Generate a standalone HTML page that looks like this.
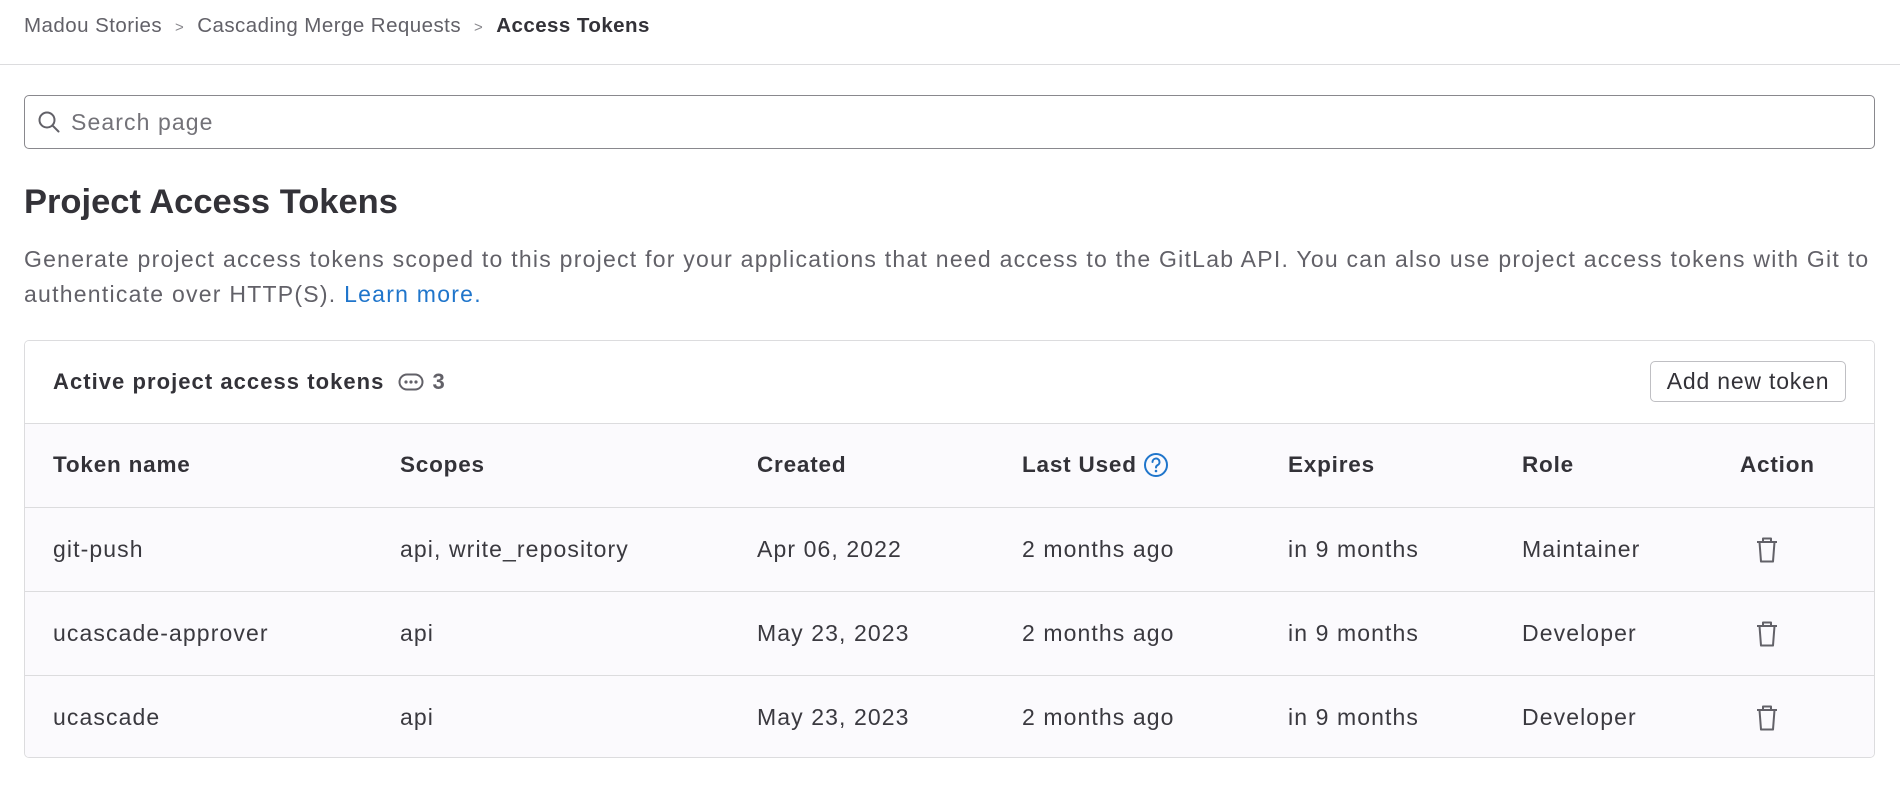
<!DOCTYPE html>
<html><head><meta charset="utf-8"><style>
*{box-sizing:border-box;margin:0;padding:0}
body{width:1900px;height:788px;background:#fff;font-family:"Liberation Sans",sans-serif;color:#333238;position:relative;overflow:hidden}
.abs{position:absolute;white-space:nowrap}
.bc{top:14px;left:24px;font-size:20.5px;color:#626168;letter-spacing:0.45px}
.bc b{color:#333238}
.bc .sep{margin:0 13px;font-size:15px;color:#89888d}
.div{top:64px;left:0;width:1900px;height:1px;background:#dcdcde}
.search{top:95px;left:24px;width:1851px;height:54px;border:1px solid #89888d;border-radius:5px}
.search span{position:absolute;left:46px;top:13px;font-size:23px;letter-spacing:1.1px;color:#737278}
.h1{top:183px;left:24px;font-size:34.5px;font-weight:bold;color:#333238}
.desc{top:242px;left:24px;font-size:23px;letter-spacing:1.25px;line-height:35px;color:#626168;white-space:normal;width:1850px}
.desc a{color:#1f75cb;text-decoration:none}
.card{top:340px;left:24px;width:1851px;height:418px;border:1px solid #dcdcde;border-radius:5px;overflow:hidden}
.hdr{height:83px;border-bottom:1px solid #dcdcde;position:relative;background:#fff}
.hdr .t{position:absolute;left:28px;top:28px;font-size:22px;letter-spacing:1.05px;font-weight:bold;display:flex;align-items:center}
.hdr .c{font-size:22px;font-weight:bold;color:#626168;margin-left:8px}
.btn{position:absolute;left:1625px;top:20px;width:196px;height:41px;border:1px solid #bfbfc3;border-radius:5px;font-size:23px;letter-spacing:0.8px;text-align:center;line-height:39px;color:#333238}
.row{height:84px;border-bottom:1px solid #dcdcde;background:#fbfafd;position:relative;font-size:23px;letter-spacing:1.1px;color:#3a393f}
.row:last-child{border-bottom:none}
.row span{position:absolute;top:28px;display:flex;align-items:center}
.th span{font-weight:bold;font-size:22.5px;letter-spacing:0.8px;color:#333238}
</style></head><body>
<div class="abs bc">Madou Stories<span class="sep">&gt;</span>Cascading Merge Requests<span class="sep">&gt;</span><b>Access Tokens</b></div>
<div class="abs div"></div>
<div class="abs search"><svg style="position:absolute;left:13px;top:15px" width="22" height="22" viewBox="0 0 22 22"><circle cx="9" cy="9" r="7.5" fill="none" stroke="#626168" stroke-width="2"/><path d="M14.5 14.5L20.5 20.5" stroke="#626168" stroke-width="2" stroke-linecap="round"/></svg><span>Search page</span></div>
<div class="abs h1">Project Access Tokens</div>
<div class="abs desc">Generate project access tokens scoped to this project for your applications that need access to the GitLab API. You can also use project access tokens with Git to authenticate over HTTP(S). <a>Learn more.</a></div>
<div class="abs card">
<div class="hdr"><span class="t">Active project access tokens
<svg style="margin-left:14px" width="26" height="18" viewBox="0 0 26 18"><rect x="1.5" y="1.5" width="23" height="15" rx="7.5" fill="none" stroke="#626168" stroke-width="2"/><circle cx="8" cy="9" r="1.6" fill="#626168"/><circle cx="13" cy="9" r="1.6" fill="#626168"/><circle cx="18" cy="9" r="1.6" fill="#626168"/></svg>
<span class="c">3</span></span>
<div class="btn">Add new token</div></div>
<div class="row th"><span style="left:28px">Token name</span><span style="left:375px">Scopes</span><span style="left:732px">Created</span><span style="left:997px">Last Used<svg style="margin-left:6px" width="26" height="26" viewBox="0 0 26 26"><circle cx="13" cy="13" r="11" fill="none" stroke="#1f75cb" stroke-width="2"/><path d="M9.5 10a3.5 3.5 0 1 1 5 3.2c-1 .5-1.5 1.2-1.5 2.3" fill="none" stroke="#1f75cb" stroke-width="2" stroke-linecap="round"/><circle cx="13" cy="19" r="1.3" fill="#1f75cb"/></svg></span>
<span style="left:1263px">Expires</span><span style="left:1497px">Role</span><span style="left:1715px">Action</span></div>
<div class="row"><span style="left:28px">git-push</span><span style="left:375px">api, write_repository</span><span style="left:732px">Apr 06, 2022</span><span style="left:997px">2 months ago</span><span style="left:1263px">in 9 months</span><span style="left:1497px">Maintainer</span><svg style="position:absolute;left:1730px;top:28px" width="24" height="28" viewBox="0 0 24 28"><path d="M2 6h20M8 6V2.5h8V6M4.5 6l1.5 19.5h12L19.5 6" fill="none" stroke="#626168" stroke-width="2" stroke-linejoin="round"/></svg></div>
<div class="row"><span style="left:28px">ucascade-approver</span><span style="left:375px">api</span><span style="left:732px">May 23, 2023</span><span style="left:997px">2 months ago</span><span style="left:1263px">in 9 months</span><span style="left:1497px">Developer</span><svg style="position:absolute;left:1730px;top:28px" width="24" height="28" viewBox="0 0 24 28"><path d="M2 6h20M8 6V2.5h8V6M4.5 6l1.5 19.5h12L19.5 6" fill="none" stroke="#626168" stroke-width="2" stroke-linejoin="round"/></svg></div>
<div class="row"><span style="left:28px">ucascade</span><span style="left:375px">api</span><span style="left:732px">May 23, 2023</span><span style="left:997px">2 months ago</span><span style="left:1263px">in 9 months</span><span style="left:1497px">Developer</span><svg style="position:absolute;left:1730px;top:28px" width="24" height="28" viewBox="0 0 24 28"><path d="M2 6h20M8 6V2.5h8V6M4.5 6l1.5 19.5h12L19.5 6" fill="none" stroke="#626168" stroke-width="2" stroke-linejoin="round"/></svg></div>
</div>
</body></html>
